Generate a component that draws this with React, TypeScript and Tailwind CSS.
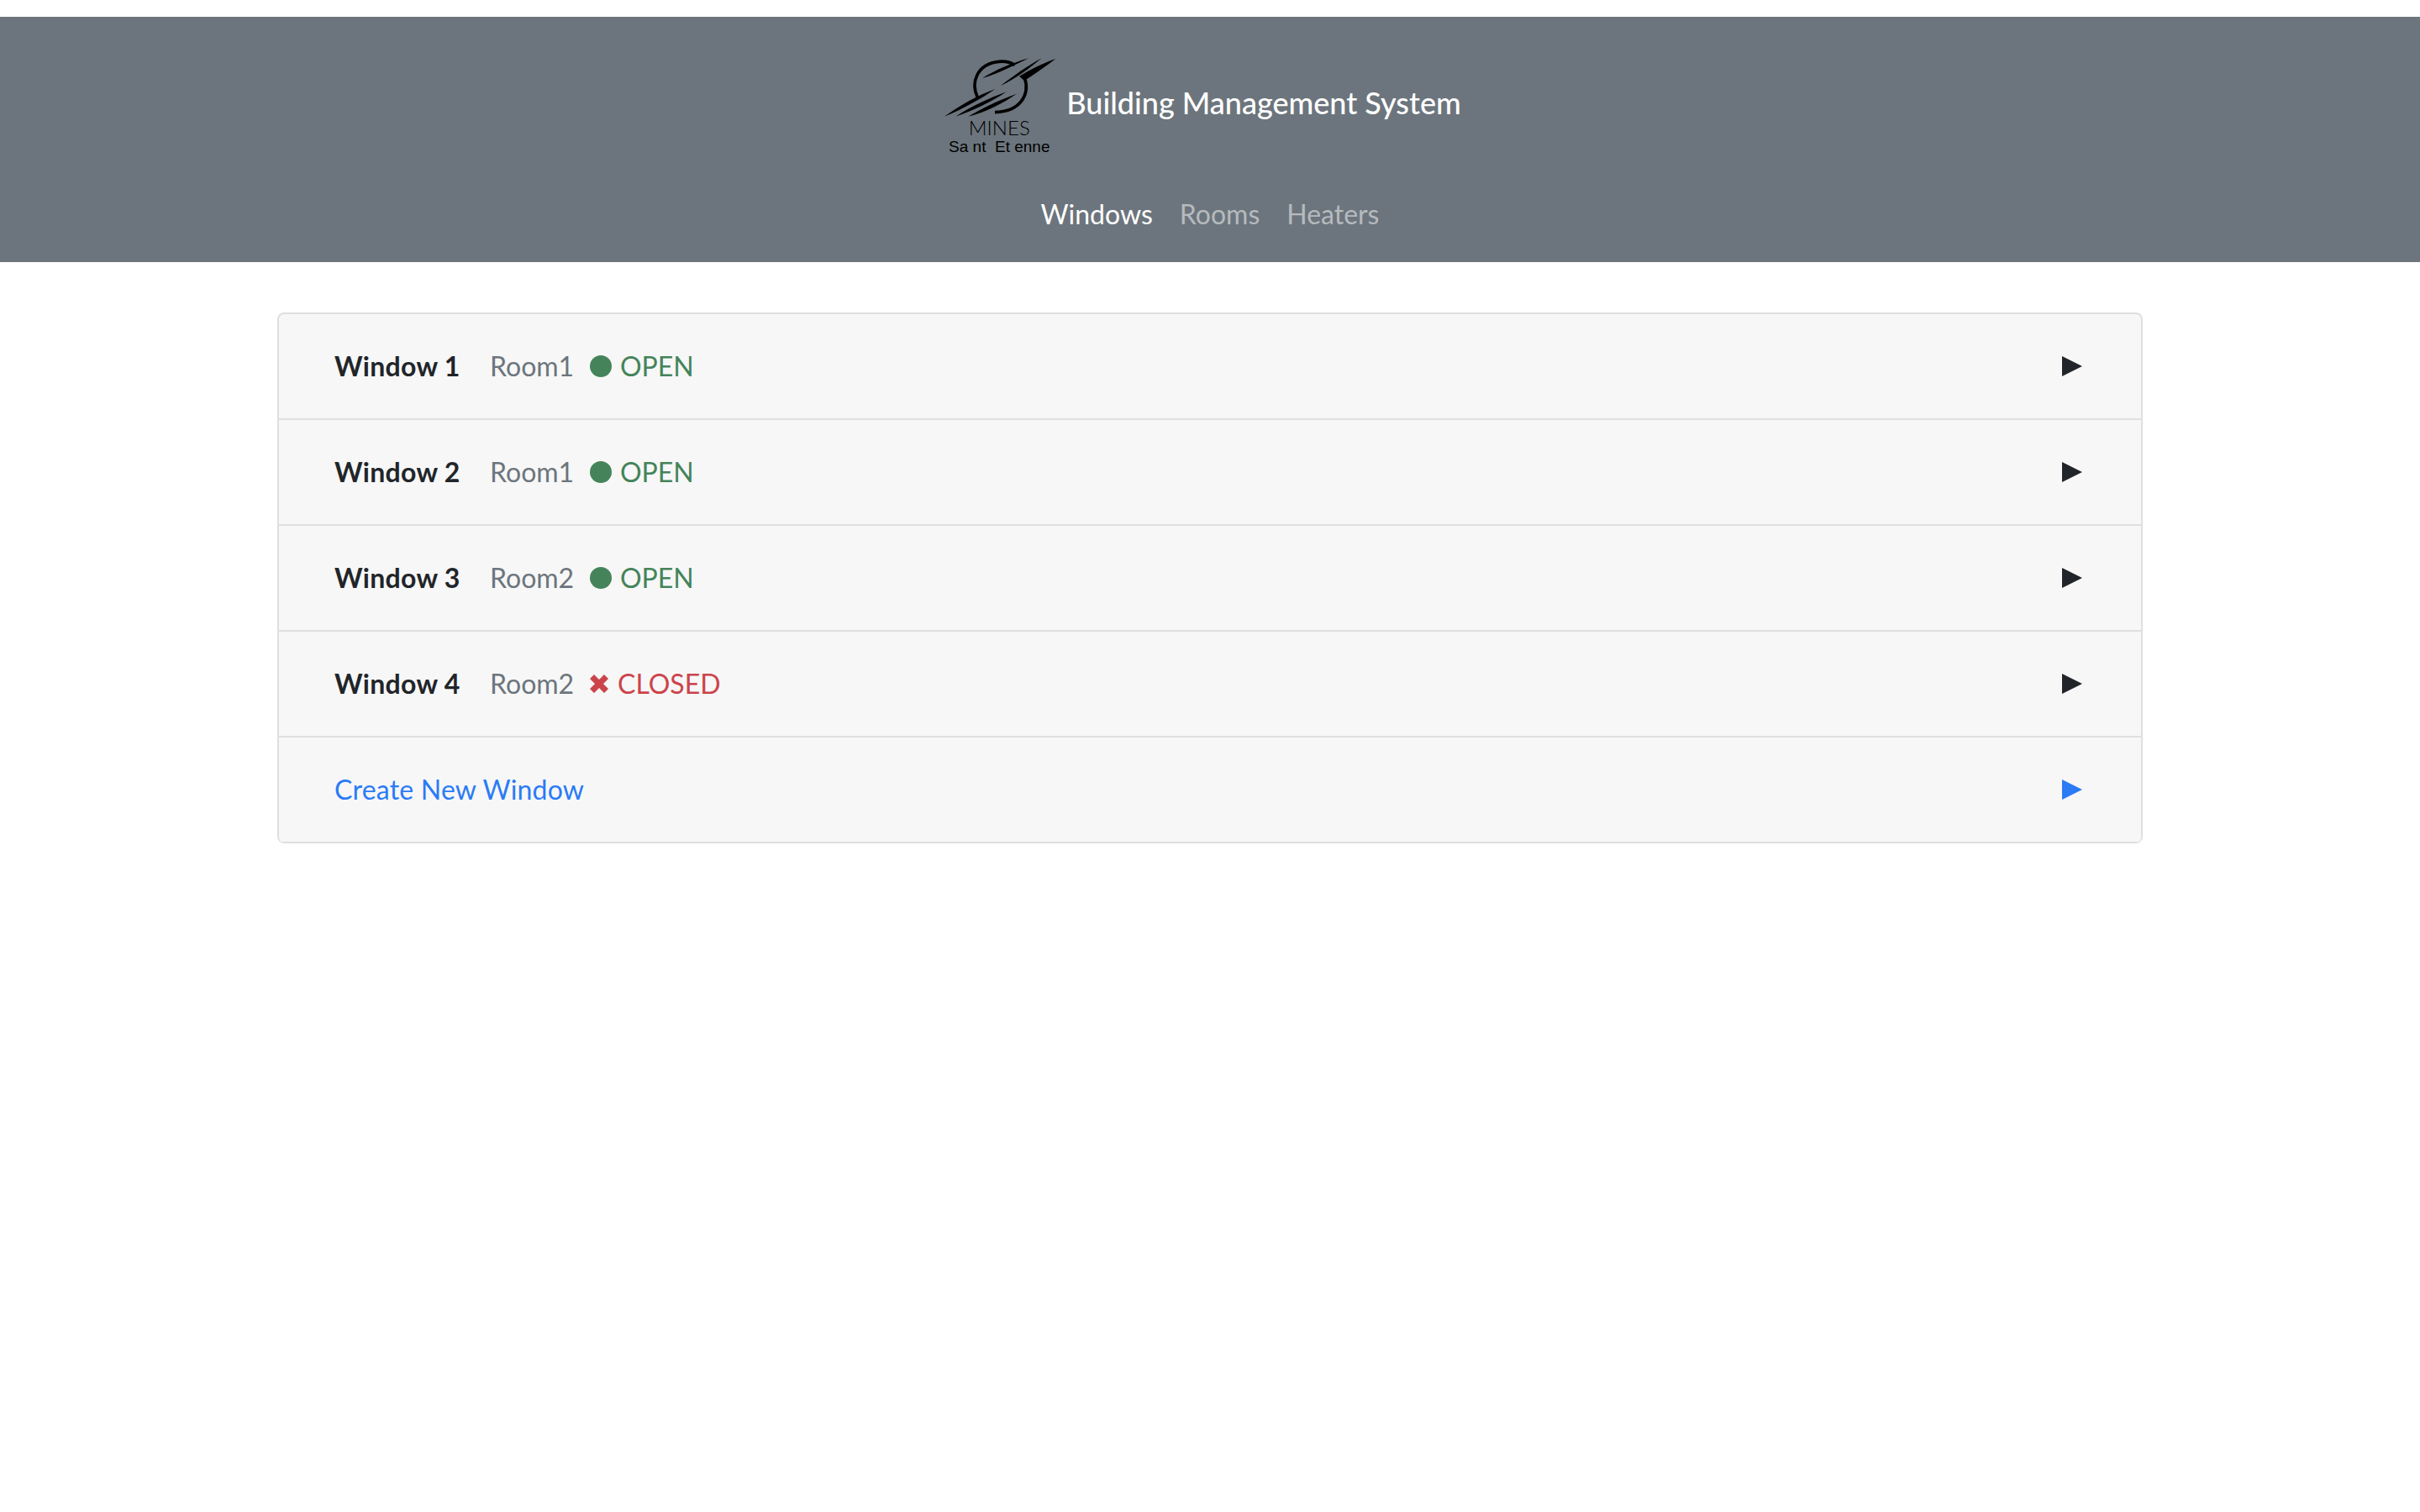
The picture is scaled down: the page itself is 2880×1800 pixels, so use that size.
const windows = [
  { name: "Window 1", room: "Room1", open: true },
  { name: "Window 2", room: "Room1", open: true },
  { name: "Window 3", room: "Room2", open: true },
  { name: "Window 4", room: "Room2", open: false },
];

const Logo = () => (
  <div className="flex flex-col items-center w-[160px] h-[135px] text-black">
    <svg viewBox="0 0 480 240" className="w-[160px] h-[80px] shrink-0" fill="currentColor">
      <path
        d="M163 168 C138 115 160 48 240 40 C262 38 280 42 296 52 M332 100 C350 160 315 218 225 221"
        fill="none"
        stroke="currentColor"
        strokeWidth="11"
      />
      <path d="M180 100 C225 70 285 46 345 28 C300 50 240 82 180 100Z" />
      <path d="M245 127 C290 92 340 56 392 28 C350 62 300 101 245 127Z" />
      <path d="M312 92 C350 70 395 46 442 30 C405 58 365 86 330 108Z" />
      <path d="M45 236 C100 196 165 160 226 138 C180 170 110 210 45 236Z" />
      <path d="M85 236 C140 201 205 170 266 148 C220 180 150 215 85 236Z" />
      <path d="M130 236 C180 206 245 175 302 155 C260 185 195 220 130 236Z" />
    </svg>
    <span className="font-['Lato',sans-serif] font-light text-[24px] leading-[22px] mt-[1px]">MINES</span>
    <span className="font-['Liberation_Sans',sans-serif] text-[19px] leading-[20px] whitespace-pre mt-[2px]">Sa nt  Et enne</span>
  </div>
);

const Arrow = ({ className }: { className: string }) => (
  <svg viewBox="0 0 24 24" className={`w-[24px] h-[24px] ${className}`} fill="currentColor">
    <path d="M0 0 L24 12 L0 24Z" />
  </svg>
);

const Row = ({ name, room, open }: { name: string; room: string; open: boolean }) => (
  <div className="flex items-center justify-between h-[126px] pl-[66px] pr-[70px] border-b-2 border-[#dfdfdf]">
    <div className="flex items-center text-[32px] leading-[48px]">
      <span className="font-bold text-[#212529] w-[185px] tracking-[0.3px]">{name}</span>
      <span className="text-[#6c757d] w-[119px]">{room}</span>
      {open ? (
        <span className="flex items-center gap-[10px] text-[#45845a]">
          <span className="w-[26px] h-[26px] rounded-full bg-[#45845a]" />
          OPEN
        </span>
      ) : (
        <span className="flex items-center gap-[10px] -ml-[1px] text-[#cc444b]">
          <svg viewBox="0 0 24 24" className="w-[24px] h-[24px]" fill="currentColor">
            <path d="M6 1 L12 7 L18 1 L23 6 L17 12 L23 18 L18 23 L12 17 L6 23 L1 18 L7 12 L1 6Z" />
          </svg>
          CLOSED
        </span>
      )}
    </div>
    <Arrow className="text-[#212529]" />
  </div>
);

export default function App() {
  return (
    <div className="min-h-[1800px] bg-white pt-[20px] font-['Lato',sans-serif]">
      <header className="bg-[#6c757d] h-[292px] flex flex-col items-center pt-[40px]">
        <div className="flex items-start">
          <Logo />
          <h1 className="text-[36px] leading-[56px] font-medium text-white mr-8 mt-[34px] whitespace-nowrap">
            Building Management System
          </h1>
        </div>
        <nav className="flex gap-[32px] text-[32px] leading-[48px] mt-[36px]">
          <span className="text-white">Windows</span>
          <span className="text-[#b6babe]">Rooms</span>
          <span className="text-[#b6babe]">Heaters</span>
        </nav>
      </header>
      <main className="w-[2220px] mx-auto mt-[60px] bg-[#f7f7f7] border-2 border-b-0 border-[#dfdfdf] rounded-[8px] overflow-hidden">
        {windows.map((w) => (
          <Row key={w.name} {...w} />
        ))}
        <div className="flex items-center justify-between h-[126px] pl-[66px] pr-[70px] border-b-2 border-[#dfdfdf] text-[32px] leading-[48px] text-[#2b7bf5]">
          <span className="tracking-[0.2px]">Create New Window</span>
          <Arrow className="text-[#2b7bf5]" />
        </div>
      </main>
    </div>
  );
}
